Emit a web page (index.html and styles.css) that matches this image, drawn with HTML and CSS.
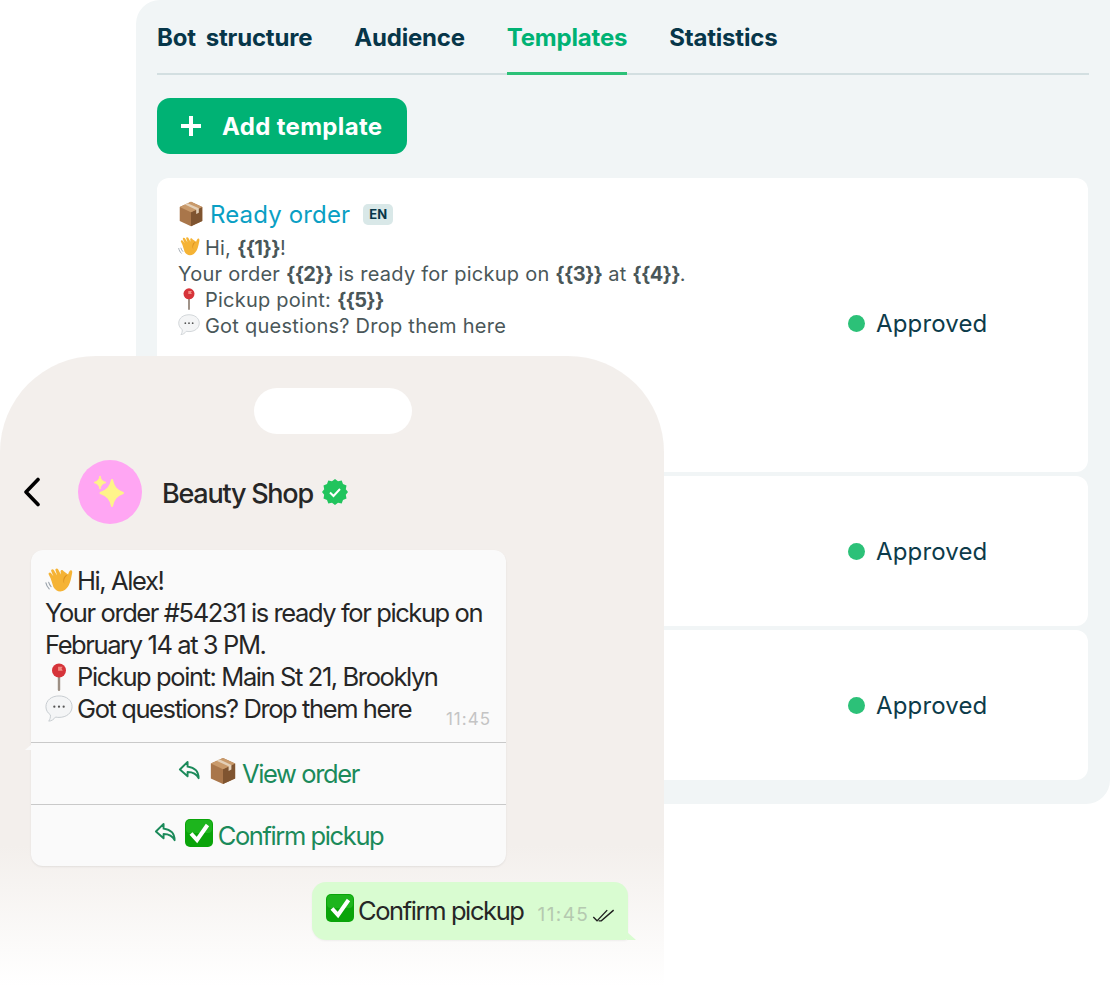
FILE: index.html
```html
<!DOCTYPE html>
<html lang="en">
<head>
<meta charset="utf-8">
<title>Templates</title>
<link rel="stylesheet" href="styles.css">
</head>
<body>
<svg class="defs" width="0" height="0" aria-hidden="true">
  <defs>
    <symbol id="e-box" viewBox="1 1 30 30">
      <path d="M16 2 29 8v16l-13 6-13-6V8z" fill="#a9764a"/>
      <path d="M16 14 29 8v16l-13 6z" fill="#7f5430"/>
      <path d="M16 2 29 8 16 14 3 8z" fill="#c99a6b"/>
      <path d="m9 5 13 6v5l3-1.500v-5L12 3.500z" fill="#e4d0b8"/>
    </symbol>
    <symbol id="e-wave" viewBox="1 3 30 30">
      <path d="M7 15 5 11c-.8-1.800 1.600-3 2.600-1.400L10 13 7.700 7.500C7 5.700 9.400 4.500 10.400 6.200L14 12l-1.800-5.500c-.6-1.800 2-2.700 2.800-1L18 11l-.3-3c-.2-2 2.400-2.500 3-.7l5 3.700c1-3 2-5 3.500-4.500 1.600.5 1 3 .3 6-1 5-2 11-7 15-5 3.500-10 1.500-12.500-3z" fill="#f5b335"/>
      <path d="M25.700 11c-5 1-6 6-4 10-1-4.500 1-8 4-10z" fill="#d98e1f"/>
      <path d="M2 20c.5 2.500 1.500 4.500 3.500 6.500M5 19.500c.5 1.800 1.300 3.200 2.500 4.500" fill="none" stroke="#9aa3ab" stroke-width="1.200" stroke-linecap="round"/>
    </symbol>
    <symbol id="e-pin" viewBox="1 1 30 30">
      <rect x="14.700" y="14" width="2.600" height="17" rx="1.300" fill="#9c8f84"/>
      <circle cx="16" cy="9" r="7.500" fill="#d6343a"/>
      <path d="M15 5h5l-1.300 2 1.300 2.200h-5z" fill="#f28b82"/>
    </symbol>
    <symbol id="e-talk" viewBox="1 2 30 30">
      <path d="M16 3c8 0 14 4.700 14 11.500S24 26 16 26c-1.300 0-2.600-.1-3.700-.4C10.500 28 8 30 5 30c1.300-1.700 2-3.900 1.800-6.700C3.800 21.200 2 18.100 2 14.500 2 7.700 8 3 16 3z" fill="#f4f5f6" stroke="#c4c9cd" stroke-width="1"/>
      <circle cx="11" cy="14.500" r="1.200" fill="#555"/><circle cx="16" cy="14.500" r="1.200" fill="#555"/><circle cx="21" cy="14.500" r="1.200" fill="#555"/>
    </symbol>
    <symbol id="e-check" viewBox="2 2 28 28">
      <rect x="2" y="2" width="28" height="28" rx="5" fill="#0aa40a"/>
      <rect x="3" y="3" width="26" height="13" rx="4" fill="#2ec22e" opacity=".55"/>
      <path d="m8 16.500 6 6.500L24.500 8" fill="none" stroke="#fff" stroke-width="4"/>
    </symbol>
    <symbol id="i-reply" viewBox="0 0 24 24">
      <path d="M10 3 2 11l8 7v-4.500c5 0 9 1 11.500 6.500 0-6-3.500-11-11.500-12z" fill="none" stroke="currentColor" stroke-width="2" stroke-linejoin="round"/>
    </symbol>
  </defs>
</svg>

<div class="stage">
  <main class="panel">
    <nav class="tabs">
      <a class="tab">Bot structure</a>
      <a class="tab">Audience</a>
      <a class="tab tab-active">Templates</a>
      <a class="tab">Statistics</a>
    </nav>
    <button class="add-btn">
      <svg class="add-icon" viewBox="0 0 20 20"><path d="M10 0v20M0 10h20" stroke="#fff" stroke-width="4"/></svg>
      <span>Add template</span>
    </button>
    <section class="cards">
      <article class="card card-tall">
        <div class="card-body">
          <h3 class="card-title">
            <svg class="emo-title"><use href="#e-box"/></svg>
            <span class="title-text">Ready order</span>
            <span class="lang">EN</span>
          </h3>
          <p class="line"><svg class="emo"><use href="#e-wave"/></svg> Hi, <b>{{1}}</b>!</p>
          <p class="line">Your order <b>{{2}}</b> is ready for pickup on <b>{{3}}</b> at <b>{{4}}</b>.</p>
          <p class="line"><svg class="emo"><use href="#e-pin"/></svg> Pickup point: <b>{{5}}</b></p>
          <p class="line"><svg class="emo"><use href="#e-talk"/></svg> Got questions? Drop them here</p>
        </div>
        <div class="status"><i class="dot"></i>Approved</div>
      </article>
      <article class="card card-short">
        <div class="card-body"></div>
        <div class="status"><i class="dot"></i>Approved</div>
      </article>
      <article class="card card-short">
        <div class="card-body"></div>
        <div class="status"><i class="dot"></i>Approved</div>
      </article>
    </section>
  </main>

  <aside class="phone">
    <div class="notch"></div>
    <header class="chat-head">
      <svg class="back" viewBox="0 0 18 30"><path d="M15 2.500 3 15l12 12.500" fill="none" stroke="#000" stroke-width="3.600" stroke-linecap="round" stroke-linejoin="round"/></svg>
      <div class="avatar">
        <svg viewBox="0 0 64 64" width="64" height="64">
          <path d="M34 20c1.500 7 4 10.500 11 13-7 2.500-9.500 6-11 13-1.500-7-4.500-10.500-11.500-13 7-2.500 10-6 11.500-13z" fill="#fff48a" stroke="#fff48a" stroke-width="2" stroke-linejoin="round"/>
          <path d="M22 16c.8 3.500 2 5 6 6.500-4 1.500-5.200 3-6 6.500-.8-3.500-2-5-6-6.500 4-1.500 5.200-3 6-6.500z" fill="#fff48a" stroke="#fff48a" stroke-linejoin="round"/>
        </svg>
      </div>
      <span class="chat-name">Beauty Shop</span>
      <svg class="verified" viewBox="0 0 26 26">
        <path d="m13 0 3 2.300 3.700-.8 1.300 3.600 3.500 1.400-.7 3.700L26 13l-2.200 2.800.7 3.700-3.500 1.400-1.300 3.600-3.700-.8L13 26l-3-2.300-3.700.8L5 20.900l-3.500-1.400.7-3.700L0 13l2.200-2.800-.7-3.700L5 5.100l1.300-3.600 3.700.8z" fill="#21c45d"/>
        <path d="m8 13.500 3.500 3.500L18 10" fill="none" stroke="#fff" stroke-width="2"/>
      </svg>
    </header>

    <div class="bubble-in">
      <div class="msg">
        <p class="msg-line"><svg class="emo-lg"><use href="#e-wave"/></svg>Hi, Alex!</p>
        <p class="msg-line">Your order #54231 is ready for pickup on</p>
        <p class="msg-line">February 14 at 3 PM.</p>
        <p class="msg-line"><svg class="emo-lg"><use href="#e-pin"/></svg>Pickup point: Main St 21, Brooklyn</p>
        <p class="msg-line msg-last"><span><svg class="emo-lg"><use href="#e-talk"/></svg>Got questions? Drop them here</span><time class="time">11:45</time></p>
      </div>
      <div class="action">
        <svg class="reply"><use href="#i-reply"/></svg>
        <svg class="emo-act"><use href="#e-box"/></svg>
        <span>View order</span>
      </div>
      <div class="action">
        <svg class="reply"><use href="#i-reply"/></svg>
        <svg class="emo-act"><use href="#e-check"/></svg>
        <span>Confirm pickup</span>
      </div>
      <i class="tail-in"></i>
    </div>

    <div class="bubble-out">
      <svg class="emo-act"><use href="#e-check"/></svg>
      <span class="out-text">Confirm pickup</span>
      <time class="time time-out">11:45</time>
      <svg class="ticks" viewBox="0 0 22 14"><path d="M1 8.500 4.500 12 14 2M6 12 8.500 12 20 2" fill="none" stroke="#1f1f1f" stroke-width="1.300"/></svg>
      <i class="tail-out"></i>
    </div>
  </aside>
</div>
</body>
</html>
```
FILE: styles.css
```css
* { box-sizing: border-box; }
html, body { margin: 0; padding: 0; background: #fff; }
body { font-family: Inter, "Liberation Sans", sans-serif; overflow: hidden; }
.defs { position: absolute; }
.stage { position: relative; width: 1110px; height: 1000px; overflow: hidden; }

.panel {
  margin-left: 136px; width: 974px; height: 804px;
  background: #f1f5f6; border-radius: 24px 0 24px 24px;
  padding: 0 21px;
  display: flex; flex-direction: column; align-items: flex-start;
}
.tabs {
  width: 932px; height: 75px; display: flex; gap: 42px;
  border-bottom: 2px solid #d3dfe1;
}
.tab {
  height: 75px; padding-top: 21px;
  font-size: 24px; font-weight: 700; line-height: 34px; color: #073649;
  letter-spacing: -.2px; word-spacing: 4.500px;
}
.tab-active { color: #00b274; border-bottom: 3px solid #2cc178; }

.add-btn {
  margin-top: 23px; width: 250px; height: 56px; padding: 0 0 0 24px;
  background: #00b274; color: #fff; border: 0; border-radius: 13px;
  display: flex; align-items: center; gap: 21px;
  font: 700 24px/34px Inter, sans-serif; letter-spacing: .33px;
}
.add-btn span { margin-top: 2px; }
.add-icon { width: 20px; height: 20px; flex: none; }

.cards { margin-top: 24px; width: 931px; display: flex; flex-direction: column; gap: 4px; }
.card { background: #fff; border-radius: 12px; display: flex; align-items: center; padding-left: 21px; }
.card-tall { height: 294px; align-items: flex-start; }
.card-tall .status { align-self: center; margin-top: -3px; }
.card-short { height: 150px; }
.card-body { width: 670px; }
.card-title { margin: 19px 0 4px; height: 34px; display: flex; align-items: center; font-weight: 400; }
.emo-title { width: 26px; height: 26px; margin-right: 6px; }
.title-text { font-size: 24px; color: #0a9fc4; letter-spacing: .15px; }
.lang {
  margin-left: 13px; width: 30px; height: 21px; border-radius: 5px; background: #d9e8e8;
  font-size: 13px; font-weight: 700; color: #073649; text-align: center; line-height: 21px;
}
.line { margin: 0; height: 26px; font-size: 20px; line-height: 26px; color: #4a5759; white-space: nowrap; letter-spacing: .25px; }
.line b { font-weight: 700; letter-spacing: -.7px; }
.emo { width: 22px; height: 22px; vertical-align: -3px; margin-right: -1px; }

.status { display: flex; align-items: center; font-size: 24px; color: #0d3b4a; letter-spacing: .15px; }
.dot { width: 17px; height: 17px; border-radius: 50%; background: #2cc178; margin-right: 11px; }

.phone {
  position: absolute; left: 0; top: 356px; width: 664px; height: 644px;
  border-radius: 96px 96px 0 0;
  background: linear-gradient(#f3efec 0, #f3efec 490px, #fff 630px);
  display: flex; flex-direction: column;
}
.notch { align-self: center; margin: 32px 0 0 2px; width: 158px; height: 46px; border-radius: 23px; background: #fff; }
.chat-head { margin-top: 26px; height: 64px; display: flex; align-items: center; padding-left: 23px; }
.back { width: 18px; height: 30px; }
.avatar { margin-left: 37px; width: 64px; height: 64px; border-radius: 50%; background: #ffa6f3; }
.chat-name { margin: 3px 0 0 20px; font-size: 27px; font-weight: 500; color: #262626; letter-spacing: -1.250px; }
.verified { margin-left: 9px; width: 26px; height: 26px; }

.bubble-in {
  position: relative; margin: 26px 0 0 31px; width: 475px; background: #fafafa;
  border-radius: 12px; box-shadow: 0 1px 2px rgba(0,0,0,.08);
}
.msg { padding: 15px 15px 0 14px; height: 192px; }
.msg-line { margin: 0; height: 32px; font-size: 25.500px; line-height: 32px; color: #262626; letter-spacing: -1.400px; white-space: nowrap; }
.msg-last { display: flex; justify-content: space-between; align-items: flex-end; }
.emo-lg { width: 28px; height: 28px; vertical-align: -5px; margin-right: 4px; flex: none; }
.emo-act { width: 28px; height: 28px; margin-top: -6px; flex: none; }
.time { font-size: 17px; line-height: 22px; color: #c4c4c4; letter-spacing: 1px; transform: translateY(5px); }
.action {
  height: 62px; border-top: 1px solid #c9c9c9;
  display: flex; align-items: center; justify-content: center; gap: 8px;
  font-size: 25.500px; color: #1b8a5a; letter-spacing: -1.400px;
}
.action span { margin-left: -3px; }
.reply { width: 23px; height: 23px; margin-top: -7px; }
.tail-in { position: absolute; left: -6px; top: 194px; width: 7px; height: 6px; background: #fafafa; clip-path: polygon(100% 0, 100% 100%, 0 100%); }

.bubble-out {
  position: relative; align-self: flex-start; margin: 16px 0 0 312px; width: 316px; height: 58px;
  background: #d9fcd1; border-radius: 14px 14px 4px 14px; box-shadow: 0 1px 2px rgba(0,0,0,.05);
  display: flex; align-items: center; padding-left: 14px;
  font-size: 25.500px; color: #262626; letter-spacing: -1.400px;
}
.out-text { margin: -2px 0 0 4px; }
.time-out { margin: 8px 0 0 14px; color: #b5c9b0; font-size: 19px; letter-spacing: 1.400px; transform: none; }
.ticks { width: 24px; height: 15px; margin: 8px 0 0 3px; }
.tail-out { position: absolute; right: -8px; bottom: 0; width: 9px; height: 8px; background: #d9fcd1; clip-path: polygon(0 0, 100% 100%, 0 100%); }
```
